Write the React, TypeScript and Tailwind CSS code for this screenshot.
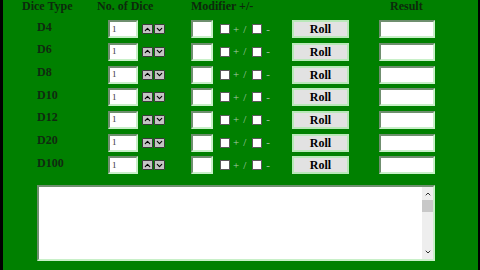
import { ChevronUp, ChevronDown } from "lucide-react";

const dice = ["D4", "D6", "D8", "D10", "D12", "D20", "D100"];

const serif = { fontFamily: '"Liberation Serif", "Times New Roman", serif' };

function Inset({ className = "" }: { className?: string }) {
  return (
    <div
      className={
        "h-[18px] bg-white border-2 border-t-[#6f8f6f] border-l-[#6f8f6f] border-b-[#c8f0c8] border-r-[#c8f0c8] " +
        className
      }
    />
  );
}

function Box() {
  return <div className="w-[10px] h-[10px] bg-white border border-[#5a5a5a]" />;
}

function DiceRow({ name }: { name: string }) {
  return (
    <div className="flex items-center h-[22.67px]">
      <div className="w-[71px] -mt-[5px] text-[12px] font-bold text-[#102a10] leading-none">{name}</div>
      <div className="w-[30px] h-[18px] bg-white border-2 border-t-[#6f8f6f] border-l-[#6f8f6f] border-b-[#c8f0c8] border-r-[#c8f0c8] flex items-center pl-[2px] text-[9px] text-[#333] leading-none">
        1
      </div>
      <div className="ml-[4px] flex gap-[1px]">
        <div className="w-[11px] h-[10px] bg-[#c4c4c4] border border-[#3a3a3a] rounded-[1px] flex items-center justify-center">
          <ChevronUp size={9} strokeWidth={3} className="text-black" />
        </div>
        <div className="w-[11px] h-[10px] bg-[#c4c4c4] border border-[#3a3a3a] rounded-[1px] flex items-center justify-center">
          <ChevronDown size={9} strokeWidth={3} className="text-black" />
        </div>
      </div>
      <Inset className="ml-[26px] w-[22px]" />
      <div className="ml-[7px] flex items-center text-[11px] text-[#a8c8a8] leading-none">
        <Box />
        <span className="ml-[3px]">+</span>
        <span className="ml-[4px]">/</span>
        <span className="ml-[6px]"><Box /></span>
        <span className="ml-[4px]">-</span>
      </div>
      <div className="ml-[22px] w-[57px] h-[18px] bg-[#e2e2e2] border-2 border-[#b8e8b8] flex items-center justify-center text-[12px] font-bold text-black leading-none">
        Roll
      </div>
      <Inset className="ml-[30px] w-[56px]" />
    </div>
  );
}

export default function App() {
  return (
    <div className="w-[480px] h-[270px] overflow-hidden bg-[#008000] border-l-[3px] border-r-[2px] border-black" style={serif}>
      <div className="flex items-center h-[12px] text-[12px] font-bold text-[#0c2a0c] leading-[12px]">
        <span className="ml-[19px] w-[75px]">Dice Type</span>
        <span className="w-[94px]">No. of Dice</span>
        <span className="w-[199px]">Modifier +/-</span>
        <span>Result</span>
      </div>
      <div className="mt-[6px] pl-[34px] flex flex-col">
        {dice.map(d => (
          <DiceRow key={d} name={d} />
        ))}
      </div>
      <div className="mt-[8px] ml-[34px] w-[398px] h-[76px] bg-white border-2 border-t-[#6f8f6f] border-l-[#6f8f6f] border-b-[#c8f0c8] border-r-[#c8f0c8] flex justify-end">
        <div className="w-[11px] h-full bg-[#eeeeee] flex flex-col items-center">
          <ChevronUp size={8} strokeWidth={3} className="text-[#333] mt-[3px]" />
          <div className="w-full h-[12px] bg-[#c8c8c8] mt-[2px]" />
          <div className="flex-1" />
          <ChevronDown size={8} strokeWidth={3} className="text-[#333] mb-[3px]" />
        </div>
      </div>
    </div>
  );
}
